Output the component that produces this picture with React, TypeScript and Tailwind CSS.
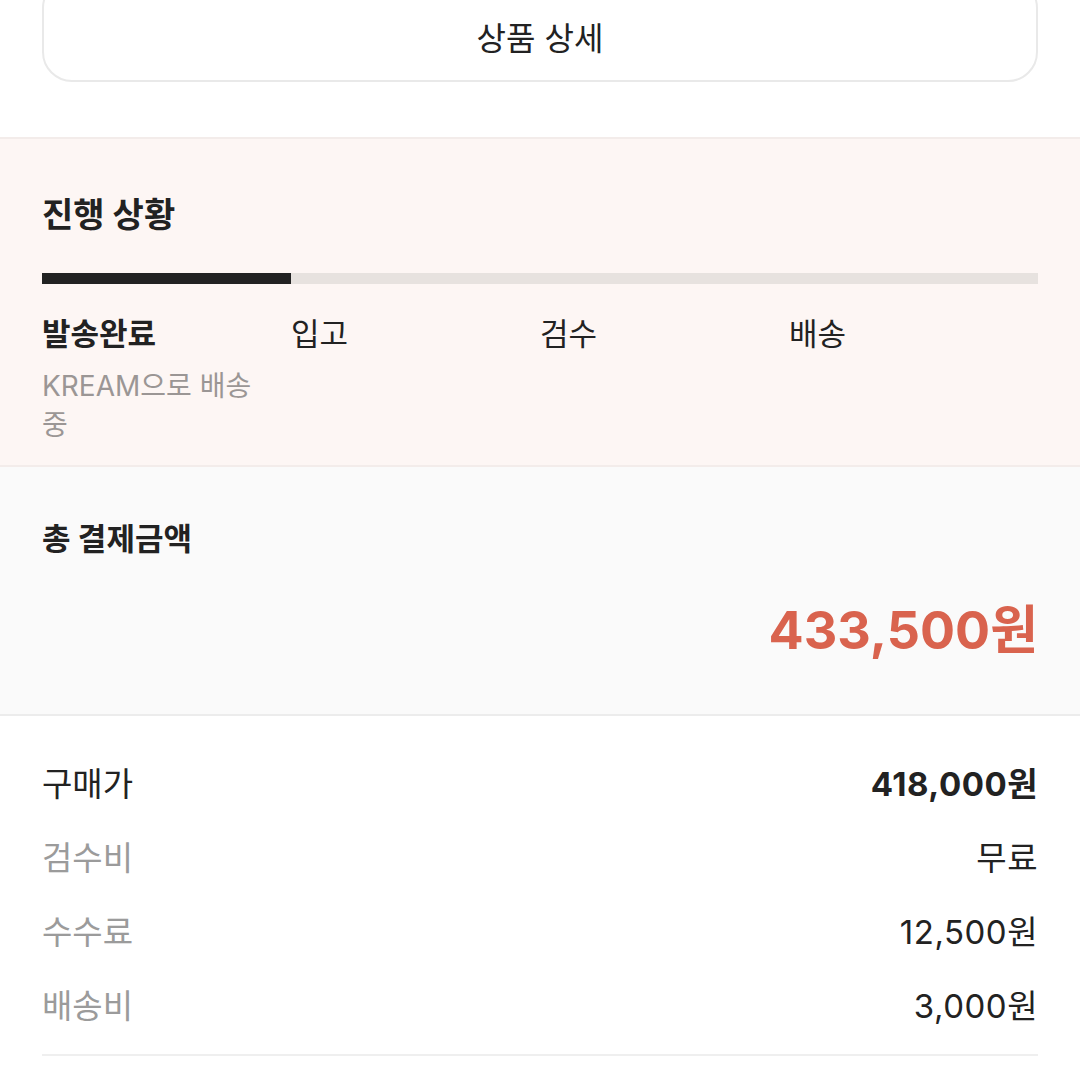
import React from 'react';

const steps = [
  { label: '발송완료', desc: 'KREAM으로 배송 중', active: true },
  { label: '입고' },
  { label: '검수' },
  { label: '배송' },
];

const rows = [
  { label: '구매가', value: '418,000원', main: true },
  { label: '검수비', value: '무료' },
  { label: '수수료', value: '12,500원' },
  { label: '배송비', value: '3,000원' },
];

export default function App() {
  return (
    <div
      className="w-[1080px] h-[1080px] overflow-hidden bg-white text-[#222222]"
      style={{ fontFamily: 'Inter, "Noto Sans CJK KR", "Noto Sans", sans-serif' }}
    >
      {/* product detail button */}
      <div className="px-[42px] pb-[55px]">
        <button className="w-full h-[104px] mt-[-22px] pt-[18px] rounded-[30px] border-2 border-[#e9e9e9] bg-white text-[32px] text-[#222222]">
          상품 상세
        </button>
      </div>

      {/* progress */}
      <section className="bg-[#fdf6f4] border-y-2 border-[#f3ecea] px-[42px] pt-[52px] pb-[20px]">
        <h2 className="text-[34px] font-bold leading-[48px]">진행 상황</h2>
        <div className="mt-[34px] h-[11px] bg-[#e7e2df] flex">
          <div className="w-1/4 bg-[#222222]" />
        </div>
        <div className="grid grid-cols-4 mt-[28px]">
          {steps.map((s) => (
            <div key={s.label} className="pr-[10px]">
              <div className={`text-[31px] leading-[44px] ${s.active ? 'font-bold' : ''}`}>{s.label}</div>
              {s.desc && <div className="text-[28px] leading-[39px] text-[#9b9695] mt-[11px]">{s.desc}</div>}
            </div>
          ))}
        </div>
      </section>

      {/* total */}
      <section className="bg-[#fafafa] border-b-2 border-[#ececec] px-[42px] pt-[50px] pb-[51px]">
        <h3 className="text-[31px] font-bold leading-[44px]">총 결제금액</h3>
        <div className="mt-[38px] text-right text-[52px] font-bold leading-[64px] text-[#d9634e]">433,500원</div>
      </section>

      {/* breakdown */}
      <section className="px-[42px] pt-[46px]">
        <div className="flex flex-col gap-[30px] pb-[26px] border-b-2 border-[#efefef]">
          {rows.map((r) => (
            <div key={r.label} className="flex justify-between items-center text-[33px] leading-[44px]">
              <span className={r.main ? 'text-[#222222]' : 'text-[#9b9b9b]'}>{r.label}</span>
              <span className={r.main ? 'font-bold tracking-[0.5px]' : 'tracking-[0.5px]'}>{r.value}</span>
            </div>
          ))}
        </div>
      </section>
    </div>
  );
}
